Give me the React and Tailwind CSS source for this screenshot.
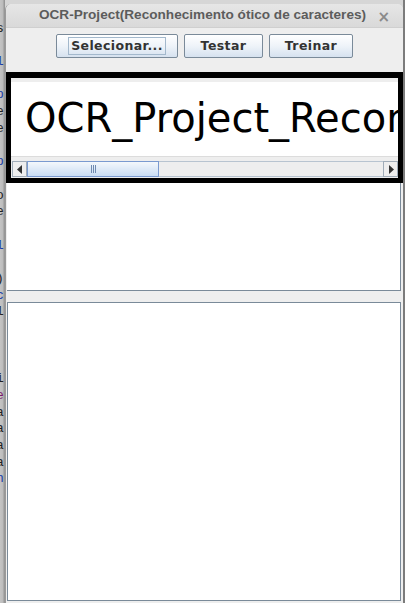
const CODE_LINES = [
  ['', ''], ['s', 'text-[#222]'], ['', ''], ['l', 'text-[#1a3fa8]'], ['', ''],
  ['p', 'text-[#1a3fa8]'], ['e', 'text-[#222]'], ['e', 'text-[#222]'], ['', ''],
  ['p', 'text-[#1a3fa8]'], ['', ''], ['o', 'text-[#222]'], ['e', 'text-[#222]'],
  ['', ''], ['l', 'text-[#1a3fa8]'], ['', ''], [')', 'text-[#222]'], ['c', 'text-[#1a3fa8]'],
  ['l', 'text-[#222]'], ['', ''], ['', ''], ['', ''], ['i', 'text-[#222]'],
  ['e', 'text-[#7a1a6a]'], ['a', 'text-[#222]'], ['a', 'text-[#222]'], ['a', 'text-[#222]'],
  ['a', 'text-[#222]'], ['n', 'text-[#1a3fa8]'],
];

function Button({ children, focused, width }) {
  return (
    <div
      className={`${width} h-[24px] flex items-center justify-center rounded-[2px] border border-[#7a8a99] bg-gradient-to-b from-[#ffffff] via-[#eef3f9] to-[#d6e2ef]`}
    >
      <span
        className={`px-[2px] leading-[16px] text-[12.5px] font-bold tracking-[0.4px] text-[#333333] ${focused ? 'outline outline-1 outline-[#a3b8cc]' : ''}`}
      >
        {children}
      </span>
    </div>
  );
}

function Arrow({ dir }) {
  return (
    <div className="w-[15px] h-[16px] flex items-center justify-center border border-[#a0acb8] bg-[#eeeeee]">
      <svg width="6" height="9" viewBox="0 0 6 9">
        {dir === 'left' ? <path d="M5 0 L0 4.5 L5 9 Z" fill="#333" /> : <path d="M1 0 L6 4.5 L1 9 Z" fill="#333" />}
      </svg>
    </div>
  );
}

export default function App() {
  return (
    <div className="w-[405px] h-[603px] overflow-hidden bg-[#d6d6d6] flex" style={{ fontFamily: '"DejaVu Sans", sans-serif' }}>
      <div className="w-[5px] h-full pt-[4px] bg-gradient-to-r from-[#c4c4c4] via-[#bdbdbd] to-[#8e8e8e] overflow-hidden">
        <div className="-ml-[4px] font-['Liberation_Mono',monospace] text-[13px] leading-[16.7px]">
          {CODE_LINES.map(([c, cls], i) => (
            <div key={i} className={`h-[16.7px] ${cls}`}>{c || '\u00a0'}</div>
          ))}
        </div>
      </div>

      <div className="mt-[4px] w-[398px] h-[599px] flex flex-col rounded-t-[6px] bg-[#eeeeee] overflow-hidden border-l border-[#9a9a9a]">
        <div className="h-[24px] shrink-0 flex items-center relative bg-gradient-to-b from-[#e6e6e6] to-[#d9d9d9] border-b border-[#cfcfcf]">
          <div className="flex-1 text-center pr-[4px] text-[13.6px] font-bold text-[#5c5c5c] font-['Liberation_Sans',sans-serif]">
            OCR-Project(Reconhecimento ótico de caracteres)
          </div>
          <div className="absolute right-[13px] top-[2px] text-[15px] font-bold text-[#8a8a8a]">×</div>
        </div>

        <div className="h-[44px] shrink-0 flex items-start justify-center gap-[6px] pt-[6px]">
          <Button width="w-[122px]" focused>Selecionar...</Button>
          <Button width="w-[79px]">Testar</Button>
          <Button width="w-[84px]">Treinar</Button>
        </div>

        <div className="h-[111px] shrink-0 border-[5px] border-t-[6px] border-r-[7px] border-black flex flex-col mr-[-2px]">
          <div className="h-[4px] bg-[#eeeeee]" />
          <div className="h-[74px] bg-white overflow-hidden whitespace-nowrap pl-[14px] text-[40px] leading-[72px] text-black">
            OCR_Project_Reconhecimento
          </div>
          <div className="h-[22px] bg-[#eeeeee] flex items-end pb-[1px] pl-[1px] border-t border-[#dcdcdc]">
            <Arrow dir="left" />
            <div className="w-[132px] h-[16px] border border-[#7a9ad0] bg-gradient-to-b from-[#f4f8fc] to-[#c9dcf3] flex items-center justify-center gap-[1px]">
              <span className="w-px h-[8px] bg-[#6f8ab0]" />
              <span className="w-px h-[8px] bg-[#6f8ab0]" />
              <span className="w-px h-[8px] bg-[#6f8ab0]" />
            </div>
            <div className="flex-1 h-[16px] border-y border-[#b8c4d0] bg-[#eeeeee]" />
            <Arrow dir="right" />
          </div>
        </div>

        <div className="h-[108px] shrink-0 bg-white border-b border-r border-[#7a8a99] mr-[2px] ml-[1px]" />
        <div className="h-[11px] shrink-0 bg-[#eeeeee]" />
        <div className="flex-1 bg-white border border-[#7a8a99] mr-[2px] ml-[1px] mb-[2px]" />
      </div>

      <div className="w-[2px] h-full bg-[#7c7c7c]" />
    </div>
  );
}
